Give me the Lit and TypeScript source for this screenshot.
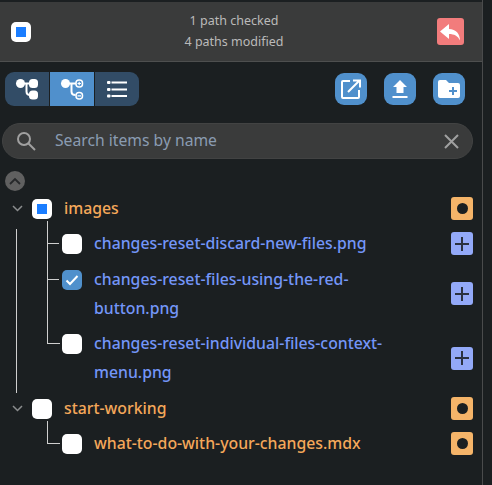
import {html, css, LitElement, svg} from 'lit';
import {customElement} from 'lit/decorators.js';

type Row = {
	name: string;
	kind: 'folder' | 'added' | 'modified';
	check: 'none' | 'some' | 'all';
	last?: boolean;
};

const chevron = svg`<path d="M1 1l4.5 4.5L10 1" fill="none" stroke="#8b8d8e" stroke-width="1.5"/>`;

@customElement('app-root')
export class AppRoot extends LitElement {
	static styles = css`
		:host {
			display: block;
			width: 492px;
			height: 485px;
			overflow: hidden;
			background: #1b1f21;
			font-family: "Noto Sans", sans-serif;
		}
		.frame {
			box-sizing: border-box;
			width: 483px;
			height: 485px;
			border-right: 1px solid #4a4b4c;
			padding-top: 2px;
		}
		.header {
			display: flex;
			align-items: center;
			justify-content: space-between;
			height: 60px;
			padding: 0 18px 0 11px;
			background: #3a3b3b;
			border-bottom: 1px solid #4e4f4f;
			box-sizing: border-box;
		}
		.status {
			padding-bottom: 2px;
			text-align: center;
			font-size: 12.5px;
			line-height: 21px;
			color: #bababa;
		}
		.undo {
			width: 27px;
			height: 27px;
			border-radius: 3px;
			background: #f27c7c;
			display: flex;
			align-items: center;
			justify-content: center;
		}
		.box {
			flex: none;
			box-sizing: border-box;
			width: 20px;
			height: 20px;
			border-radius: 5px;
			background: #fff;
			display: flex;
			align-items: center;
			justify-content: center;
		}
		.box.some::after {
			content: "";
			width: 10px;
			height: 10px;
			background: #1a7dff;
		}
		.box.all {
			background: #5090cc;
		}
		.toolbar {
			display: flex;
			align-items: center;
			justify-content: space-between;
			padding: 10px 17px 0 5px;
		}
		.seg {
			display: flex;
			gap: 1px;
			border-radius: 9px;
			overflow: hidden;
		}
		.seg div {
			width: 44px;
			height: 34px;
			background: #324c66;
			display: flex;
			align-items: center;
			justify-content: center;
		}
		.seg div.on {
			background: #5090cc;
		}
		.actions {
			display: flex;
			gap: 17px;
		}
		.actions div {
			width: 32px;
			height: 32px;
			border-radius: 9px;
			background: #5090cc;
			display: flex;
			align-items: center;
			justify-content: center;
		}
		.search {
			display: flex;
			align-items: center;
			box-sizing: border-box;
			width: 471px;
			height: 36px;
			margin: 17px 0 0 2px;
			padding: 0 13px;
			border-radius: 18px;
			background: #3a3b3b;
			border: 1px solid #424343;
		}
		.search span {
			flex: 1;
			margin: 0 0 2px 19px;
			font-size: 15.7px;
			color: #8a9cb2;
		}
		.collapse {
			width: 20px;
			height: 20px;
			margin: 12px 0 0 5px;
			border-radius: 50%;
			background: #606060;
			display: flex;
			align-items: center;
			justify-content: center;
		}
		.tree {
			display: flex;
			flex-direction: column;
			gap: 6.5px;
			margin-top: 2.5px;
			padding-right: 9px;
		}
		.children {
			display: flex;
			flex-direction: column;
			gap: 6.5px;
			margin-left: 16px;
			padding-left: 30px;
			border-left: 1px solid transparent;
		}
		.children.line {
			border-left-color: #cfcfcf;
			padding-bottom: 6px;
			margin-bottom: -6px;
		}
		.row {
			display: flex;
			align-items: center;
			font-size: 15.8px;
			font-weight: 500;
			line-height: 29px;
		}
		.toggle {
			width: 32px;
			padding-left: 12px;
			box-sizing: border-box;
			display: flex;
		}
		.left {
			flex: 1;
			display: flex;
			align-items: flex-start;
			min-width: 0;
		}
		.left .box {
			margin-top: 5px;
		}
		.name {
			flex: 1;
			margin-left: 12px;
			margin-right: 50px;
		}
		.folder .name,
		.modified .name {
			color: #f5a85a;
		}
		.added .name {
			color: #7496f8;
		}
		.child {
			position: relative;
		}
		.child .left {
			padding-left: 15px;
		}
		.child::before {
			content: "";
			position: absolute;
			left: 0;
			top: -8px;
			width: 12px;
			height: 22px;
			border-bottom: 1px solid #cfcfcf;
		}
		.child.end::before {
			border-left: 1px solid #cfcfcf;
		}
		.child::after {
			content: "";
			position: absolute;
			left: 0;
			top: -8px;
			bottom: -7px;
			border-left: 1px solid #cfcfcf;
		}
		.child.end::after {
			display: none;
		}
		.badge {
			flex: none;
			width: 22px;
			height: 23px;
			border-radius: 3px;
			display: flex;
			align-items: center;
			justify-content: center;
		}
		.badge.added {
			background: #93a9f8;
		}
		.badge.modified {
			background: #f5b469;
		}
		.badge.modified::after {
			content: "";
			width: 11px;
			height: 11px;
			border-radius: 50%;
			background: #1b1f21;
		}
	`;

	private box(check: Row['check']) {
		return html`<span class="box ${check}">
			${check === 'all'
				? html`<svg width="14" height="12" viewBox="0 0 14 12"><path d="M1.5 6.5l3.5 3.5 7.5-8" fill="none" stroke="#fff" stroke-width="2"/></svg>`
				: ''}
		</span>`;
	}

	private badge(kind: Row['kind']) {
		return html`<span class="badge ${kind === 'added' ? 'added' : 'modified'}">
			${kind === 'added'
				? html`<svg width="14" height="14" viewBox="0 0 14 14"><path d="M7 0v14M0 7h14" stroke="#2a3140" stroke-width="2"/></svg>`
				: ''}
		</span>`;
	}

	private folder(row: Row) {
		return html`<div class="row folder">
			<span class="toggle"><svg width="11" height="7" viewBox="0 0 11 7">${chevron}</svg></span>
			<div class="left">${this.box(row.check)}<span class="name">${row.name}</span></div>
			${this.badge('folder')}
		</div>`;
	}

	private file(row: Row) {
		return html`<div class="row child ${row.kind} ${row.last ? 'end' : ''}">
			<div class="left">${this.box(row.check)}<span class="name">${row.name}</span></div>
			${this.badge(row.kind)}
		</div>`;
	}

	render() {
		const images: Row[] = [
			{name: 'changes-reset-discard-new-files.png', kind: 'added', check: 'none'},
			{name: 'changes-reset-files-using-the-red-button.png', kind: 'added', check: 'all'},
			{name: 'changes-reset-individual-files-context-menu.png', kind: 'added', check: 'none', last: true},
		];
		const working: Row[] = [
			{name: 'what-to-do-with-your-changes.mdx', kind: 'modified', check: 'none', last: true},
		];
		return html`<div class="frame">
			<div class="header">
				${this.box('some')}
				<div class="status">1 path checked<br />4 paths modified</div>
				<div class="undo">
					<svg width="22" height="20" viewBox="0 0 22 20"><path d="M10 2L1 9.500 10 17v-5c5 0 9 2 11 6.500C21 12 17 7 10 7z" fill="#fff"/></svg>
				</div>
			</div>
			<div class="toolbar">
				<div class="seg">
					<div>
						<svg width="24" height="22" viewBox="0 0 24 22" fill="#fff" stroke="#fff">
							<circle cx="5.500" cy="5.500" r="4.500" stroke="none"/>
							<rect x="14" y="1" width="9" height="9" rx="3.500" stroke="none"/>
							<rect x="14" y="12.500" width="9" height="9" rx="3.500" stroke="none"/>
							<path d="M9 5.500h6M11.500 5.500v8c0 2.500 1 3.500 4 3.500" fill="none" stroke-width="2"/>
						</svg>
					</div>
					<div class="on">
						<svg width="24" height="22" viewBox="0 0 24 22" fill="none" stroke="#fff">
							<circle cx="5.500" cy="5.500" r="4.500" fill="#fff" stroke="none"/>
							<rect x="16" y="2" width="6.500" height="7" rx="3" stroke-width="1.500"/>
							<rect x="16" y="14.500" width="6.500" height="6.500" rx="3" stroke-width="1.500"/>
							<path d="M9 5.500h7M11.500 5.500v8c0 2.500 1 3.500 4 3.500" stroke-width="2"/>
							<path d="M17.500 5.500h3.500M19.200 3.800v3.500M17.500 17.800h3.500" stroke-width="1.200"/>
						</svg>
					</div>
					<div>
						<svg width="20" height="18" viewBox="0 0 20 18" fill="#fff">
							<rect x="0" y="1" width="3.500" height="3" rx="1"/>
							<rect x="0" y="8" width="3.500" height="3" rx="1"/>
							<rect x="0" y="14.500" width="3.500" height="3" rx="1"/>
							<rect x="4.500" y="1.500" width="15.500" height="2"/>
							<rect x="4.500" y="8.500" width="15.500" height="2"/>
							<rect x="4.500" y="15" width="15.500" height="2"/>
						</svg>
					</div>
				</div>
				<div class="actions">
					<div>
						<svg width="20" height="20" viewBox="0 0 20 20" fill="none" stroke="#fff" stroke-width="2">
							<path d="M9 2H2a1 1 0 0 0-1 1v15a1 1 0 0 0 1 1h15a1 1 0 0 0 1-1v-7"/>
							<path d="M7 13L18 2M12 1.500h7v7" />
						</svg>
					</div>
					<div>
						<svg width="16" height="20" viewBox="0 0 16 20" fill="#fff">
							<path d="M8 1l7 7h-3.500v6h-7v-6H1z"/>
							<rect x="0.500" y="17" width="15" height="2"/>
						</svg>
					</div>
					<div>
						<svg width="22" height="18" viewBox="0 0 22 18">
							<path d="M2 0h6l3 3h9a2 2 0 0 1 2 2v11a2 2 0 0 1-2 2H2a2 2 0 0 1-2-2V2a2 2 0 0 1 2-2z" fill="#fff"/>
							<path d="M15 7v8M11 11h8" stroke="#5090cc" stroke-width="2"/>
						</svg>
					</div>
				</div>
			</div>
			<div class="search">
				<svg width="20" height="20" viewBox="0 0 20 20" fill="none" stroke="#a0a0a0" stroke-width="2">
					<circle cx="8" cy="8" r="6"/>
					<path d="M12.500 12.500L19 19"/>
				</svg>
				<span>Search items by name</span>
				<svg width="15" height="15" viewBox="0 0 15 15" stroke="#a0a0a0" stroke-width="2"><path d="M1 1l13 13M14 1L1 14"/></svg>
			</div>
			<div class="collapse">
				<svg width="12" height="8" viewBox="0 0 12 8"><path d="M1 7l5-5 5 5" fill="none" stroke="#26282a" stroke-width="1.800"/></svg>
			</div>
			<div class="tree">
				${this.folder({name: 'images', kind: 'folder', check: 'some'})}
				<div class="children line">${images.map((r) => this.file(r))}</div>
				${this.folder({name: 'start-working', kind: 'folder', check: 'none'})}
				<div class="children">${working.map((r) => this.file(r))}</div>
			</div>
		</div>`;
	}
}
